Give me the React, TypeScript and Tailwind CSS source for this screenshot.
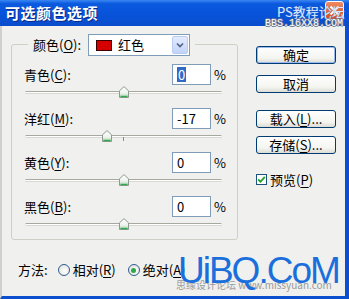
import React from "react";

const FONT = { fontFamily: '"Noto Sans CJK SC", "Liberation Sans", sans-serif' };

function Mn({ k }: { k: string }) {
  return (
    <>
      (<span className="underline underline-offset-2">{k}</span>)
    </>
  );
}

function Thumb() {
  return (
    <svg width="10" height="12" viewBox="0 0 10 12">
      <defs>
        <linearGradient id="tg" x1="0" y1="0" x2="0" y2="1">
          <stop offset="0" stopColor="#ffffff" />
          <stop offset="0.6" stopColor="#eef3ee" />
          <stop offset="1" stopColor="#9fd3a8" />
        </linearGradient>
      </defs>
      <path d="M0.5 4.8 L5 0.6 L9.5 4.8 V11.5 H0.5 Z" fill="url(#tg)" stroke="#8c9a90" strokeWidth="1" />
      <path d="M1.5 10.5 H8.5" stroke="#35a84e" strokeWidth="1.4" />
    </svg>
  );
}

interface RowProps {
  label: string;
  k: string;
  value: string;
  pos: number; // -100..100
  selected?: boolean;
  tick?: boolean;
}

function SliderRow({ label, k, value, pos, selected, tick }: RowProps) {
  const left = 98.5 + (pos / 100) * 98.5 - 5;
  return (
    <div className="flex flex-col">
      <div className="flex items-center h-[21px] pl-[12px] pr-[12px]">
        <span className="flex-1 text-[13px] text-black">
          {label}
          <Mn k={k} />:
        </span>
        <div className="w-[39px] h-[21px] bg-white border border-[#7f9db9] flex items-center pl-[4px] text-[13px]">
          {selected ? (
            <span className="bg-[#316ac5] text-white px-[1px] leading-[15px]">{value}</span>
          ) : (
            <span className="text-black">{value}</span>
          )}
        </div>
        <span className="ml-[3px] w-[11px] text-[13px] text-black">%</span>
      </div>
      <div className="relative h-[23px] ml-[13px] w-[197px]">
        <div className="mt-[6px] h-[3px] rounded-full border-t border-[#a8a8a0] bg-white border-b border-b-[#d8d8d0]" />
        {tick && <div className="absolute left-[98px] top-[8px] w-px h-[4px] bg-[#8a8a84]" />}
        <div className="absolute top-[1px]" style={{ left }}>
          <Thumb />
        </div>
      </div>
    </div>
  );
}

function XpButton({ children, primary }: { children: React.ReactNode; primary?: boolean }) {
  return (
    <div
      className={
        "w-[80px] h-[18px] rounded-[3px] border border-[#003c74] flex items-center justify-center text-[13px] text-black bg-[linear-gradient(to_bottom,#ffffff,#f4f4f0_70%,#dcdcd4)] " +
        (primary ? "shadow-[inset_0_0_0_1px_#9bb9ee]" : "")
      }
    >
      {children}
    </div>
  );
}

function Radio({ checked }: { checked?: boolean }) {
  return (
    <div className="w-[12px] h-[12px] rounded-full border border-[#2f5c8c] bg-[radial-gradient(circle_at_60%_60%,#ffffff,#dcdcd8)] flex items-center justify-center">
      {checked && <div className="w-[5px] h-[5px] rounded-full bg-[#2fa84a]" />}
    </div>
  );
}

export default function App() {
  return (
    <div className="relative w-[349px] h-[299px] flex flex-col overflow-hidden" style={FONT}>
      {/* title bar */}
      <div className="h-[26px] flex items-center pl-[5px] bg-[linear-gradient(to_bottom,#3a86f2_0%,#0b5ade_14%,#0753da_55%,#0a4ccc_100%)]">
        <span className="text-white text-[15px] font-bold tracking-[0.5px] [text-shadow:1px_1px_0_#0a2a8a]">
          可选颜色选项
        </span>
      </div>

      {/* body */}
      <div className="flex-1 flex bg-[#f0f0ee] border-l-2 border-l-[#cfcfcb] border-r-4 border-r-[#0b4fcf] border-b-[3px] border-b-[#0b4fcf]">
        {/* left column */}
        <div className="flex flex-col pl-[9px]">
          <div className="mt-[18px] w-[227px] h-[196px] border border-[#cfcfc6] rounded-[3px] flex flex-col">
            {/* legend */}
            <div className="-mt-[11px] ml-[16px] self-start flex items-center gap-[5px] px-[5px] bg-[#f0f0ee]">
              <span className="w-[50px] text-[13px] text-black">
                颜色<Mn k="O" />:
              </span>
              <div className="w-[102px] h-[22px] bg-white border border-[#7f9db9] flex items-center">
                <div className="ml-[7px] w-[16px] h-[11px] bg-[#d40000] border border-[#3a0000]" />
                <span className="ml-[6px] flex-1 text-[13px] text-black">红色</span>
                <div className="mr-px w-[16px] h-[18px] rounded-[2px] border border-[#b9cdf3] bg-[linear-gradient(to_bottom,#e3ecfd,#c3d4f8)] flex items-center justify-center">
                  <svg width="8" height="6" viewBox="0 0 8 6">
                    <path d="M1 1.5 L4 4.5 L7 1.5" fill="none" stroke="#4d6185" strokeWidth="1.6" />
                  </svg>
                </div>
              </div>
            </div>
            <div className="mt-[8px] flex flex-col">
              <SliderRow label="青色" k="C" value="0" pos={0} selected />
              <SliderRow label="洋红" k="M" value="-17" pos={-17} tick />
              <SliderRow label="黄色" k="Y" value="0" pos={0} />
              <SliderRow label="黑色" k="B" value="0" pos={0} />
            </div>
          </div>

          {/* method */}
          <div className="mt-[20px] ml-[7px] h-[20px] flex items-center text-[13px] text-black">
            <span>方法:</span>
            <div className="ml-[10px]">
              <Radio />
            </div>
            <span className="ml-[3px]">
              相对<Mn k="R" />
            </span>
            <div className="ml-[12px]">
              <Radio checked />
            </div>
            <span className="ml-[3px]">
              绝对<Mn k="A" />
            </span>
          </div>
        </div>

        {/* right column */}
        <div className="ml-[18px] pt-[20px] flex flex-col">
          <XpButton primary>确定</XpButton>
          <div className="mt-[11px]">
            <XpButton>取消</XpButton>
          </div>
          <div className="mt-[17px]">
            <XpButton>
              载入<Mn k="L" />...
            </XpButton>
          </div>
          <div className="mt-[8px]">
            <XpButton>
              存储<Mn k="S" />...
            </XpButton>
          </div>
          <div className="mt-[16px] flex items-center">
            <div className="w-[11px] h-[11px] border border-[#1c5180] bg-white flex items-center justify-center">
              <svg width="9" height="9" viewBox="0 0 9 9">
                <path d="M1.2 4.5 L3.5 6.8 L7.8 1.8" fill="none" stroke="#21a121" strokeWidth="1.8" />
              </svg>
            </div>
            <span className="ml-[3px] text-[13px] text-black">
              预览<Mn k="P" />
            </span>
          </div>
        </div>
      </div>

      {/* close button */}
      <div className="absolute left-[325px] top-[1px] w-[19px] h-[19px] rounded-[3px] border border-white bg-[linear-gradient(to_bottom,#ef8a64,#d8491f)] flex items-center justify-center">
        <svg width="11" height="11" viewBox="0 0 11 11">
          <path d="M1.5 1.5 L9.5 9.5 M9.5 1.5 L1.5 9.5" stroke="white" strokeWidth="2" />
        </svg>
      </div>

      {/* forum watermark */}
      <div className="absolute left-[277px] top-[4px] whitespace-nowrap text-[13px] leading-[15px] text-[#dbe8ff] [text-shadow:0_0_1px_#5a7fc0]">
        PS教程论坛
      </div>
      <div
        className="absolute left-[265px] top-[19px] whitespace-nowrap text-[10px] leading-[10px] text-white [text-shadow:1px_0_0_#6b7a94,-1px_0_0_#6b7a94,0_1px_0_#6b7a94,0_-1px_0_#6b7a94]"
        style={{ fontFamily: '"Liberation Mono", monospace' }}
      >
        BBS.16XX8.COM
      </div>

      {/* site watermark */}
      <div
        className="absolute left-[176px] top-[279px] whitespace-nowrap text-[10px] leading-[11px] text-[#9a9a9a]"
        style={{ fontFamily: '"Noto Sans CJK SC", sans-serif' }}
      >
        思缘设计论坛 www.missyuan.com
      </div>
      <div
        className="absolute left-[178px] top-[251px] whitespace-nowrap text-[37px] leading-[40px] text-[#1a6fdc] tracking-[-2px]"
        style={{ fontFamily: '"Liberation Sans", Arial, sans-serif' }}
      >
        UiBQ.CoM
      </div>
    </div>
  );
}
